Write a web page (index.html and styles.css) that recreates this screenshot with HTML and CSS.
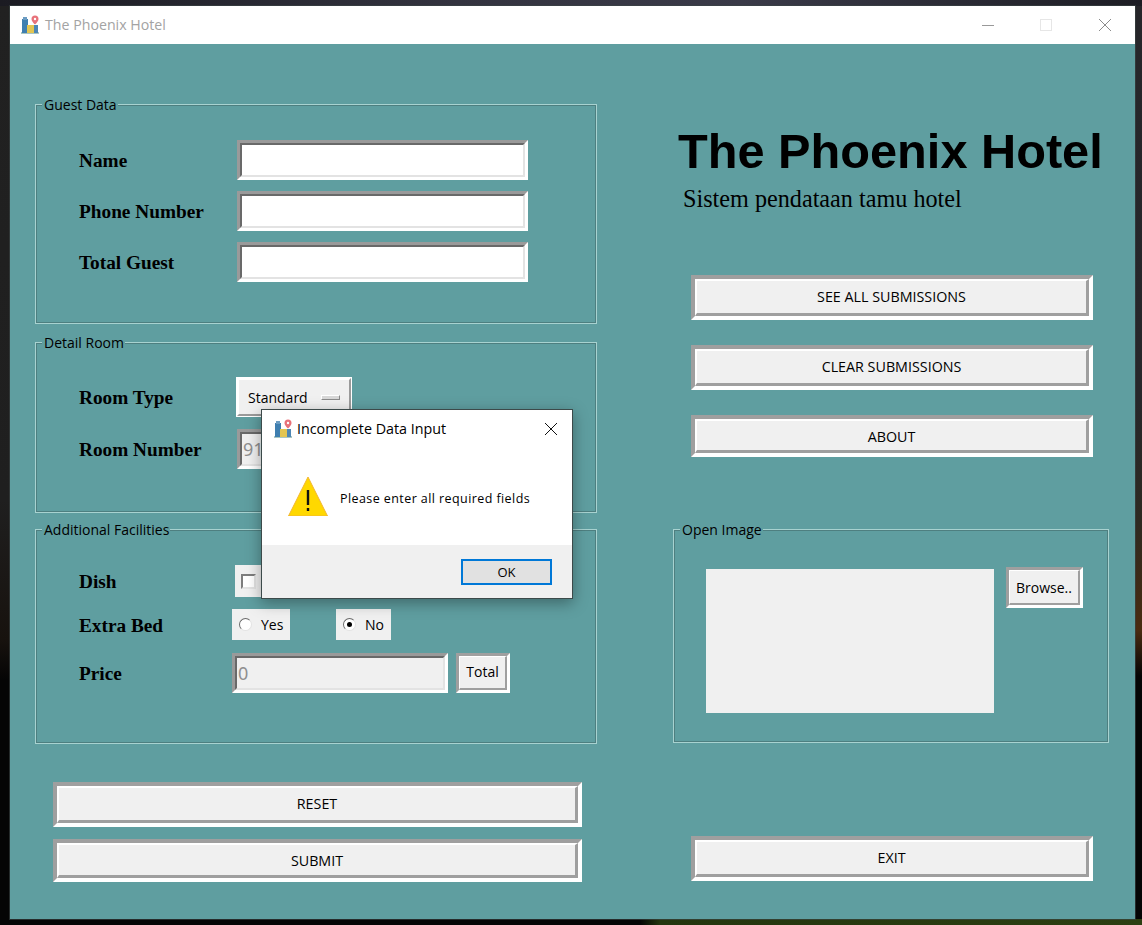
FILE: index.html
```html
<!DOCTYPE html>
<html lang="en">
<head>
    <meta charset="UTF-8">
    <meta name="viewport" content="width=device-width, initial-scale=1.0">
    <title>The Phoenix Hotel</title>
    <link rel="stylesheet" href="styles.css">
</head>
<body>
    <svg class="defs" width="0" height="0" aria-hidden="true">
        <symbol id="appIcon" viewBox="0 0 20 20">
            <rect x="1" y="17" width="18" height="2" fill="#a9c6c2"/>
            <rect x="2" y="4" width="6" height="14" fill="#3f7fb0"/>
            <rect x="3" y="2" width="4" height="3" fill="#6b9cc2"/>
            <rect x="7" y="10" width="8" height="8" fill="#e3c552"/>
            <rect x="14" y="10" width="4" height="8" fill="#4d86b5"/>
            <path d="M15 0.500a3.500 3.500 0 0 1 3.500 3.500c0 2.500-3.500 5.500-3.500 5.500s-3.500-3-3.500-5.500a3.500 3.500 0 0 1 3.500-3.500z" fill="#e8727a"/>
            <circle cx="15" cy="4" r="1.200" fill="#fff"/>
        </symbol>
    </svg>

    <div class="window">
        <div class="titlebar">
            <svg class="app-icon"><use href="#appIcon"/></svg>
            <span class="title-text">The Phoenix Hotel</span>
            <div class="win-controls">
                <svg width="12" height="12" viewBox="0 0 12 12"><path d="M0 6.500h12" stroke="#999" fill="none"/></svg>
                <svg width="12" height="12" viewBox="0 0 12 12"><rect x=".5" y=".5" width="11" height="11" stroke="#e6e6e6" fill="none"/></svg>
                <svg class="win-close" width="12" height="12" viewBox="0 0 12 12"><path d="M0 0l12 12M12 0L0 12" stroke="#8c8c8c" fill="none"/></svg>
            </div>
        </div>

        <div class="content">
            <div class="left">
                <fieldset class="group group-guest">
                    <legend>Guest Data</legend>
                    <div class="row row-entry">
                        <label class="field-label">Name</label>
                        <span class="sunken entry-wide"><input type="text"></span>
                    </div>
                    <div class="row row-entry">
                        <label class="field-label">Phone Number</label>
                        <span class="sunken entry-wide"><input type="text"></span>
                    </div>
                    <div class="row row-entry">
                        <label class="field-label">Total Guest</label>
                        <span class="sunken entry-wide"><input type="text"></span>
                    </div>
                </fieldset>

                <fieldset class="group group-room">
                    <legend>Detail Room</legend>
                    <div class="row row-room">
                        <label class="field-label">Room Type</label>
                        <button class="option-menu">Standard<i class="option-mark"></i></button>
                    </div>
                    <div class="row row-room">
                        <label class="field-label">Room Number</label>
                        <span class="sunken entry-wide disabled"><input type="text" value="91" disabled></span>
                    </div>
                </fieldset>

                <fieldset class="group group-extra">
                    <legend>Additional Facilities</legend>
                    <div class="row row-dish">
                        <label class="field-label">Dish</label>
                        <span class="check-box"><i class="check-mark"></i></span>
                    </div>
                    <div class="row row-bed">
                        <label class="field-label">Extra Bed</label>
                        <span class="radio radio-yes"><i class="radio-mark"></i>Yes</span>
                        <span class="radio radio-no"><i class="radio-mark on"></i>No</span>
                    </div>
                    <div class="row row-price">
                        <label class="field-label">Price</label>
                        <span class="sunken entry-price disabled"><input type="text" value="0" disabled></span>
                        <button class="btn btn-small btn-total"><span>Total</span></button>
                    </div>
                </fieldset>

                <div class="left-actions">
                    <button class="btn btn-reset"><span>RESET</span></button>
                    <button class="btn btn-submit"><span>SUBMIT</span></button>
                </div>
            </div>

            <div class="right">
                <h1>The Phoenix Hotel</h1>
                <p class="subtitle">Sistem pendataan tamu hotel</p>

                <div class="menu">
                    <button class="btn btn-menu"><span>SEE ALL SUBMISSIONS</span></button>
                    <button class="btn btn-menu"><span>CLEAR SUBMISSIONS</span></button>
                    <button class="btn btn-menu btn-about"><span>ABOUT</span></button>
                </div>

                <fieldset class="group group-image">
                    <legend>Open Image</legend>
                    <div class="image-row">
                        <div class="image-box"></div>
                        <button class="btn btn-small btn-browse"><span>Browse..</span></button>
                    </div>
                </fieldset>

                <button class="btn btn-menu btn-exit"><span>EXIT</span></button>
            </div>
        </div>

        <div class="dialog">
            <div class="dialog-title">
                <svg class="app-icon"><use href="#appIcon"/></svg>
                <span>Incomplete Data Input</span>
                <svg class="dialog-close" width="12" height="12" viewBox="0 0 12 12"><path d="M0 0l12 12M12 0L0 12" stroke="#111" fill="none"/></svg>
            </div>
            <div class="dialog-body">
                <svg class="warn-icon" width="40" height="40" viewBox="0 0 40 40">
                    <path d="M20 1L39.500 40H.5z" fill="#ffd800" stroke="#f2b632"/>
                    <rect x="18.800" y="14" width="2.400" height="15" fill="#111"/>
                    <rect x="18.800" y="32" width="2.400" height="3" fill="#111"/>
                </svg>
                <span class="dialog-message">Please enter all required fields</span>
            </div>
            <div class="dialog-footer">
                <button class="dialog-ok">OK</button>
            </div>
        </div>
    </div>
</body>
</html>
```

FILE: styles.css
```css
* {
    box-sizing: border-box;
}
html, body {
    height: 100%;
}
body {
    margin: 0;
    height: 925px;
    padding: 6px 7px 6px 10px;
    overflow: hidden;
    background-color: #0a0a0a;
    background-image:
        linear-gradient(to right, #050505 0, #050505 640px, #24360f 660px, #2c3f12 100%),
        linear-gradient(to right, #1b1b22 0, #33333f 40%, #3a3a48 65%, #1d1d24 100%),
        linear-gradient(to bottom, #212121 0, #1f1f1f 500px, #17120e 640px, #050505 680px),
        linear-gradient(to bottom, #26262a 0, #27272a 400px, #2e2a22 520px, #4a2b10 630px, #050505 676px);
    background-size: 100% 6px, 100% 6px, 10px 100%, 7px 100%;
    background-position: 0 100%, 0 0, 0 0, 100% 0;
    background-repeat: no-repeat;
    font-family: "Open Sans", "Noto Sans", sans-serif;
    font-size: 14px;
    color: #000;
}
.defs {
    position: absolute;
}

/* window */
.window {
    position: relative;
    width: 1125px;
    height: 913px;
    background: #5f9ea0;
    box-shadow: 0 0 0 1px rgba(60, 70, 70, 0.6);
}
.titlebar {
    display: flex;
    align-items: center;
    height: 38px;
    padding-left: 10px;
    background: #fff;
}
.app-icon {
    width: 20px;
    height: 20px;
    flex: none;
}
.title-text {
    margin-left: 5px;
    padding-bottom: 2px;
    font-size: 14.2px;
    color: #a3a3a3;
}
.win-controls {
    display: flex;
    gap: 46px;
    margin-left: auto;
    margin-right: 24px;
}
.win-close {
    margin-left: 1px;
}
.content {
    display: flex;
}
.left {
    width: 562px;
    margin-left: 25px;
    padding-top: 51px;
}
.right {
    width: 436px;
    margin-left: 76px;
}

/* groups */
.group {
    margin: 0;
    padding: 0;
    min-width: 0;
    border: 1px solid #a8d2d0;
    box-shadow: inset 0 0 0 1px #4e7f80;
}
.group legend {
    margin-left: 6px;
    padding: 0 1px 0 2px;
    height: 19px;
    line-height: 19px;
    font-size: 14px;
    background: #5f9ea0;
}
.group-guest {
    height: 229px;
    padding-top: 26px;
}
.group-room {
    height: 180px;
    margin-top: 9px;
    padding-top: 25px;
}
.group-extra {
    height: 224px;
    margin-top: 7px;
    padding-top: 26px;
}
.group-image {
    height: 223px;
    padding-top: 30px;
    margin-top: 63px;
}

/* rows */
.row {
    display: flex;
    align-items: center;
    padding-left: 43px;
}
.row-entry {
    height: 40px;
    margin-bottom: 11px;
}
.row-room {
    height: 40px;
    margin-bottom: 12px;
}
.row-dish {
    height: 32px;
}
.row-bed {
    height: 32px;
    margin-top: 11px;
}
.row-price {
    height: 40px;
    margin-top: 13px;
}
.field-label {
    width: 158px;
    flex: none;
    padding-top: 1px;
    font-family: "Liberation Serif", serif;
    font-size: 19.3px;
    font-weight: bold;
}
.row-bed .field-label, .row-price .field-label {
    width: 153px;
}
.row-bed .field-label {
    padding-top: 3px;
}
.row-dish .field-label {
    width: 156px;
}

/* sunken entries */
.sunken {
    display: block;
    height: 40px;
    border: 3px solid;
    border-color: #9a9a9a #fff #fff #9a9a9a;
}
.sunken input {
    display: block;
    width: 100%;
    height: 100%;
    padding: 0 1px;
    border: 2px solid;
    border-color: #696969 #e3e3e3 #e3e3e3 #696969;
    background: #fff;
    font-family: "Noto Sans", sans-serif;
    font-size: 18px;
    outline: none;
}
.sunken.disabled input {
    background: #f0f0f0;
    color: #8f8f8f;
}
.entry-wide {
    width: 291px;
}
.entry-price {
    width: 216px;
}

/* raised buttons */
.btn {
    display: block;
    padding: 0;
    border: 4px solid;
    border-color: #9f9f9f #fff #fff #9f9f9f;
    background: #f0f0f0;
    font-family: inherit;
    font-size: 14.3px;
    color: #000;
}
.btn span {
    display: flex;
    align-items: center;
    justify-content: center;
    height: 100%;
    padding-bottom: 2px;
    border: solid;
    border-width: 2px 3px 3px 2px;
    border-color: #fff #9f9f9f #9f9f9f #fff;
}
.btn-submit span, .btn-browse span {
    padding-bottom: 0;
}
.btn-about span {
    padding: 2px 0 0;
}
.btn-small {
    border-width: 3px;
    font-size: 14px;
}
.btn-small span {
    border-width: 1px 2px 2px 1px;
}
.left-actions {
    padding: 38px 0 0 18px;
}
.btn-reset {
    width: 529px;
    height: 45px;
    margin-bottom: 12px;
}
.btn-submit {
    width: 529px;
    height: 43px;
}
.btn-menu {
    width: 402px;
    height: 45px;
    margin-left: 18px;
    margin-bottom: 25px;
}
.btn-about {
    height: 42px;
    margin-bottom: 0;
}
.btn-exit {
    margin-top: 93px;
    margin-bottom: 0;
}
.btn-total {
    width: 54px;
    height: 40px;
    margin-left: 8px;
}
.btn-browse {
    width: 77px;
    height: 41px;
    margin-left: 12px;
    margin-top: -2px;
    white-space: nowrap;
}

/* heading */
h1 {
    margin: 0;
    padding: 80px 0 0 5px;
    font-family: "Liberation Sans", Arial, sans-serif;
    font-size: 48.7px;
    line-height: 55px;
    font-weight: bold;
    white-space: nowrap;
}
.subtitle {
    margin: 0;
    padding: 5px 0 0 10px;
    height: 50px;
    font-family: "Liberation Serif", serif;
    font-size: 24.2px;
    line-height: 30px;
}
.menu {
    padding-top: 46px;
}

/* option menu, check and radio */
.option-menu {
    display: flex;
    align-items: center;
    width: 114px;
    height: 38px;
    padding: 0 0 0 9px;
    border: 2px solid;
    border-color: #fff #9a9a9a #9a9a9a #fff;
    background: #f0f0f0;
    box-shadow: 0 0 0 1px #fff;
    font-family: inherit;
    font-size: 14px;
    color: #000;
}
.option-mark {
    width: 19px;
    height: 5px;
    margin-left: 13px;
    border: 1px solid;
    border-color: #fff #8a8a8a #8a8a8a #fff;
    background: #d8d8d8;
}
.check-box {
    display: flex;
    align-items: center;
    width: 40px;
    height: 32px;
    padding-left: 6px;
    background: #f0f0f0;
}
.check-mark {
    display: block;
    width: 15px;
    height: 15px;
    border: 2px solid;
    border-color: #7d7d7d #e3e3e3 #e3e3e3 #7d7d7d;
    background: #fff;
}
.radio {
    display: flex;
    align-items: center;
    height: 31px;
    background: #f0f0f0;
}
.radio-yes {
    width: 58px;
    padding-left: 7px;
}
.radio-no {
    width: 55px;
    padding-left: 7px;
    margin-left: 46px;
}
.radio-mark {
    position: relative;
    width: 13px;
    height: 13px;
    margin-right: 9px;
    border: 1px solid;
    border-color: #6a6a6a #e3e3e3 #e3e3e3 #6a6a6a;
    border-radius: 50%;
    background: #fff;
}
.radio-mark.on::after {
    content: "";
    position: absolute;
    left: 3px;
    top: 3px;
    width: 5px;
    height: 5px;
    border-radius: 50%;
    background: #000;
}

/* image */
.image-row {
    display: flex;
    align-items: flex-start;
    padding-left: 32px;
}
.image-box {
    width: 288px;
    height: 144px;
    background: #f0f0f0;
}

/* dialog */
.dialog {
    position: absolute;
    left: 251px;
    top: 403px;
    width: 312px;
    height: 190px;
    display: flex;
    flex-direction: column;
    background: #fff;
    border: 1px solid #3c4a4a;
    box-shadow: 0 4px 14px rgba(0, 0, 0, 0.35);
}
.dialog-title {
    display: flex;
    align-items: center;
    height: 37px;
    padding: 0 15px 0 11px;
}
.dialog-title span {
    margin-left: 4px;
    font-size: 14.3px;
}
.dialog-close {
    margin-left: auto;
}
.dialog-body {
    display: flex;
    align-items: center;
    flex: 1;
    padding-left: 26px;
}
.dialog-message {
    margin-left: 12px;
    padding-top: 4px;
    font-size: 12.5px;
    font-weight: 500;
    letter-spacing: 0.42px;
}
.dialog-footer {
    display: flex;
    justify-content: flex-end;
    align-items: center;
    height: 53px;
    padding-right: 20px;
    background: #f0f0f0;
}
.dialog-ok {
    width: 91px;
    height: 26px;
    padding: 0;
    border: 2px solid #0078d7;
    background: #e1e1e1;
    font-family: inherit;
    font-size: 13px;
    color: #000;
}
```
